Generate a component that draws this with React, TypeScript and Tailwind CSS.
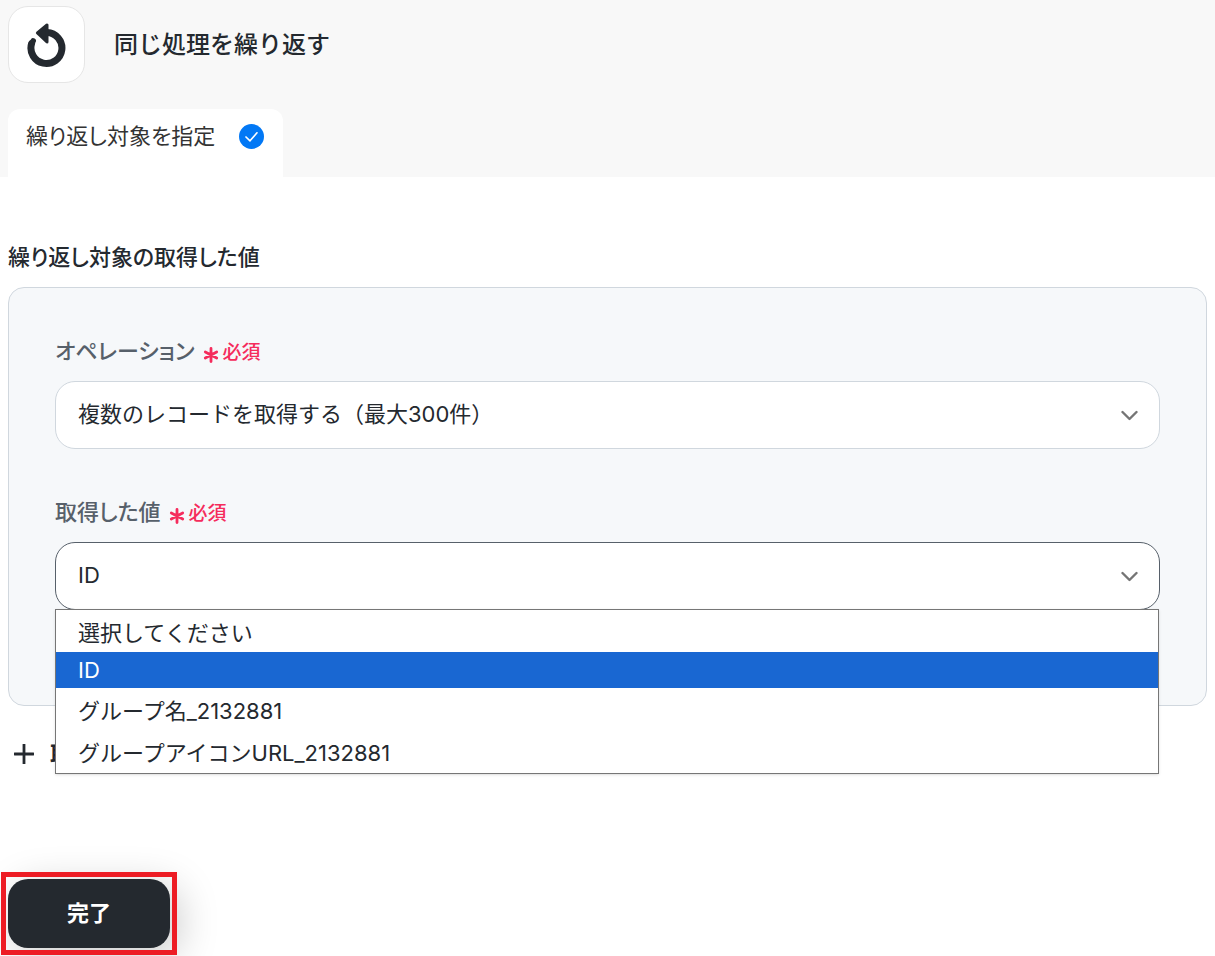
import type { ReactNode } from 'react'

const operations = ['複数のレコードを取得する（最大300件）']

const values = [
  '選択してください',
  'ID',
  'グループ名_2132881',
  'グループアイコンURL_2132881',
]

function RepeatIcon() {
  return (
    <svg viewBox="0 0 40 48" className="h-12 w-10" fill="none" aria-hidden="true">
      <path
        d="M4.6 22.5A15.5 15.5 0 1 0 20 11.5"
        stroke="#24292f"
        strokeWidth="7"
        strokeLinecap="round"
      />
      <path d="M4.6 22.5L6.2 19.8" stroke="#24292f" strokeWidth="5.5" strokeLinecap="round" />
      <path
        d="M10.4 12L20 4V21Z"
        fill="#24292f"
        stroke="#24292f"
        strokeWidth="3"
        strokeLinejoin="round"
      />
    </svg>
  )
}

function Chevron() {
  return (
    <svg
      viewBox="0 0 18 12"
      className="pointer-events-none absolute top-7 right-[21px] h-3 w-[18px]"
      fill="none"
      aria-hidden="true"
    >
      <path
        d="M1.5 3L8.5 10L15.5 3"
        stroke="#757575"
        strokeWidth="2.4"
        strokeLinecap="round"
        strokeLinejoin="round"
      />
    </svg>
  )
}

function FieldLabel({ htmlFor, children }: { htmlFor: string; children: ReactNode }) {
  return (
    <label
      htmlFor={htmlFor}
      className="flex h-8 items-center text-[22px] leading-8 font-medium text-[#57606a] [font-feature-settings:'palt']"
    >
      {children}
      <span className="ml-2 flex items-center gap-1 pt-1 text-[19px] leading-7 text-[#f52c5c]">
        <svg viewBox="0 0 16 16" className="mt-1 size-4" fill="none" aria-hidden="true">
          <path
            d="M8 1.5V14.5M2.3 5L13.7 11M13.7 5L2.3 11"
            stroke="currentColor"
            strokeWidth="2.8"
            strokeLinecap="round"
          />
        </svg>
        必須
      </span>
    </label>
  )
}

const selectClass =
  'block h-[68px] w-full appearance-none rounded-[20px] border bg-white pr-14 pb-0.5 pl-[22px] text-[22px] text-[#24292f] outline-none'

export default function App() {
  return (
    <div className="min-h-screen bg-white font-['Inter','Noto_Sans_CJK_JP',sans-serif] text-[#24292f]">
      {/* Header */}
      <header className="bg-[#f8f8f8] px-2 pt-1.5">
        <div className="flex items-center gap-[29px]">
          <div className="flex size-[77px] items-center justify-center rounded-[20px] border border-[#e6e6e6] bg-white">
            <RepeatIcon />
          </div>
          <h1 className="text-2xl font-medium">同じ処理を繰り返す</h1>
        </div>
        <div role="tablist" className="mt-[26px] flex">
          <button
            role="tab"
            aria-selected="true"
            className="flex h-[68px] items-start gap-6 rounded-t-xl bg-white px-[18px] pt-[11px] text-[22px] leading-8 text-[#333] [font-feature-settings:'palt']"
          >
            繰り返し対象を指定
            <svg viewBox="0 0 26 26" className="mt-1 size-[26px]" fill="none" aria-hidden="true">
              <circle cx="12.5" cy="12.5" r="12.5" fill="#0278f5" />
              <path
                d="M7 13L11 16.8L18 8.8"
                stroke="white"
                strokeWidth="1.7"
                strokeLinecap="round"
                strokeLinejoin="round"
              />
            </svg>
          </button>
        </div>
      </header>

      <main className="px-2 pt-16">
        <h2 className="text-[22px] leading-8 font-medium [font-feature-settings:'palt']">
          繰り返し対象の取得した値
        </h2>

        <section className="mt-3.5 rounded-2xl border border-[#d0d7de] bg-[#f6f8fa] px-[46px] pt-[47px] pb-[95px]">
          <FieldLabel htmlFor="operation">オペレーション</FieldLabel>
          <div className="relative mt-3.5">
            <select id="operation" className={`${selectClass} border-[#d0d7de]`}>
              {operations.map((name) => (
                <option key={name}>{name}</option>
              ))}
            </select>
            <Chevron />
          </div>

          <div className="mt-[47px]">
            <FieldLabel htmlFor="value">取得した値</FieldLabel>
            <div className="relative mt-3.5">
              <select id="value" defaultValue="ID" className={`${selectClass} border-[#57606a]`}>
                {values.map((name) => (
                  <option key={name}>{name}</option>
                ))}
              </select>
              <Chevron />

              {/* Open option list */}
              <ul
                role="listbox"
                aria-label="取得した値"
                className="absolute top-[67px] right-px left-0 z-10 border border-[#767676] bg-white pb-px text-[22px] shadow-sm"
              >
                {values.map((name) => (
                  <li
                    key={name}
                    role="option"
                    aria-selected={name === 'ID'}
                    className={
                      name === 'ID'
                        ? 'flex h-9 items-center bg-[#1967d2] pl-[22px] text-white'
                        : 'flex h-[42px] items-center pt-1 pl-[22px]'
                    }
                  >
                    {name}
                  </li>
                ))}
              </ul>
            </div>
          </div>
        </section>

        <button className="mt-8 flex h-8 items-center gap-4 pl-1.5 text-[22px] font-bold">
          <svg viewBox="0 0 20 20" className="size-5" fill="none" aria-hidden="true">
            <path d="M10 0.5V19.5M0.5 10H19.5" stroke="currentColor" strokeWidth="2.8" strokeLinecap="round" />
          </svg>
          取得した値を追加
        </button>
      </main>

      {/* Highlighted submit button */}
      <div className="mt-[107px] ml-1.5 w-fit p-0.5 outline-[5px] outline-[#ed1c24]">
        <button className="block h-[69px] w-[162px] rounded-[20px] bg-[#24292f] text-[22px] font-bold text-white shadow-[8px_8px_40px_rgba(0,0,0,0.22)]">
          完了
        </button>
      </div>
    </div>
  )
}
